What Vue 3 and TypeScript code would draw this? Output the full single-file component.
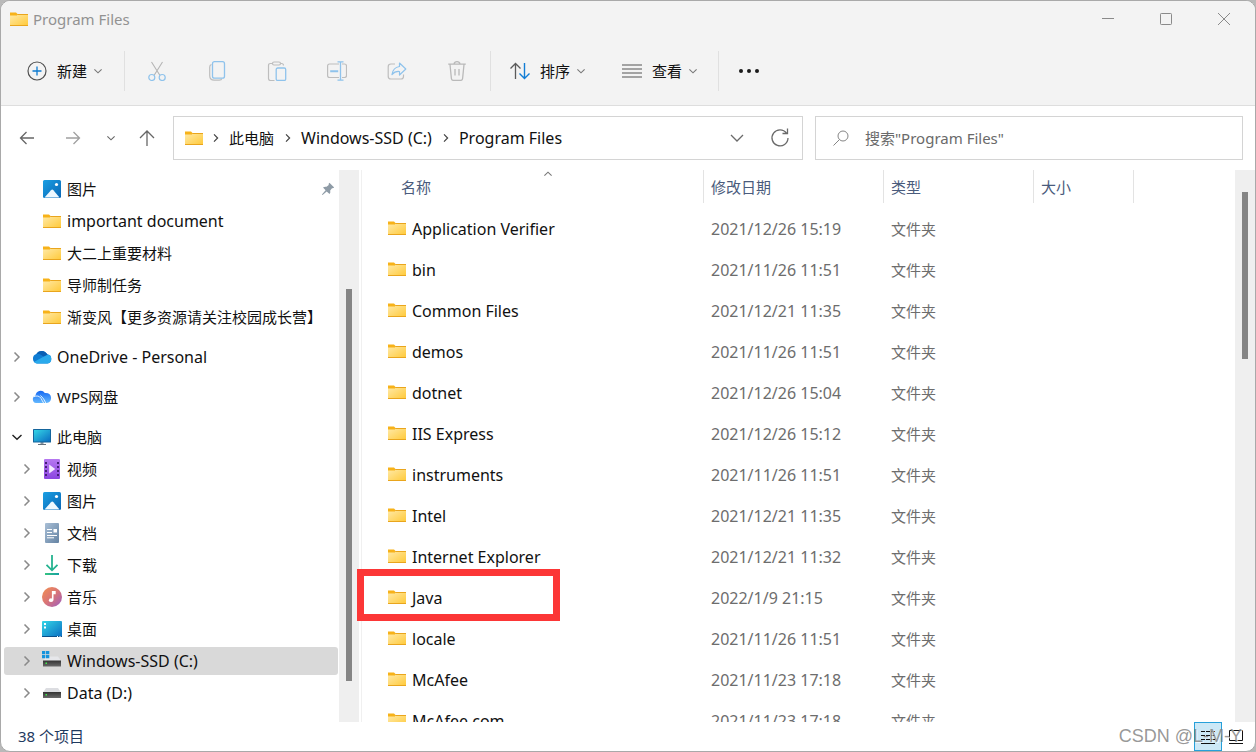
<script setup lang="ts">
import { ref } from 'vue'

interface TreeItem {
  label: string
  icon: string
  level: number
  chevron?: 'right' | 'down'
  pinned?: boolean
  selected?: boolean
  spaced?: boolean
}

interface FileRow {
  name: string
  date: string
}

const tree: TreeItem[] = [
  { label: '图片', icon: 'pictures', level: 1, pinned: true },
  { label: 'important document', icon: 'folder', level: 1 },
  { label: '大二上重要材料', icon: 'folder', level: 1 },
  { label: '导师制任务', icon: 'folder', level: 1 },
  { label: '渐变风【更多资源请关注校园成长营】', icon: 'folder', level: 1 },
  { label: 'OneDrive - Personal', icon: 'onedrive', level: 0, chevron: 'right', spaced: true },
  { label: 'WPS网盘', icon: 'wps', level: 0, chevron: 'right', spaced: true },
  { label: '此电脑', icon: 'pc', level: 0, chevron: 'down', spaced: true },
  { label: '视频', icon: 'video', level: 1, chevron: 'right' },
  { label: '图片', icon: 'pictures', level: 1, chevron: 'right' },
  { label: '文档', icon: 'document', level: 1, chevron: 'right' },
  { label: '下载', icon: 'download', level: 1, chevron: 'right' },
  { label: '音乐', icon: 'music', level: 1, chevron: 'right' },
  { label: '桌面', icon: 'desktop', level: 1, chevron: 'right' },
  { label: 'Windows-SSD (C:)', icon: 'drive-c', level: 1, chevron: 'right', selected: true },
  { label: 'Data (D:)', icon: 'drive', level: 1, chevron: 'right' },
]

const files: FileRow[] = [
  { name: 'Application Verifier', date: '2021/12/26 15:19' },
  { name: 'bin', date: '2021/11/26 11:51' },
  { name: 'Common Files', date: '2021/12/21 11:35' },
  { name: 'demos', date: '2021/11/26 11:51' },
  { name: 'dotnet', date: '2021/12/26 15:04' },
  { name: 'IIS Express', date: '2021/12/26 15:12' },
  { name: 'instruments', date: '2021/11/26 11:51' },
  { name: 'Intel', date: '2021/12/21 11:35' },
  { name: 'Internet Explorer', date: '2021/12/21 11:32' },
  { name: 'Java', date: '2022/1/9 21:15' },
  { name: 'locale', date: '2021/11/26 11:51' },
  { name: 'McAfee', date: '2021/11/23 17:18' },
  { name: 'McAfee.com', date: '2021/11/23 17:18' },
]

const crumbs: string[] = ['此电脑', 'Windows-SSD (C:)', 'Program Files']
const editTools = [
  { icon: 'cut', label: '剪切' },
  { icon: 'copy', label: '复制' },
  { icon: 'paste', label: '粘贴' },
  { icon: 'rename', label: '重命名' },
  { icon: 'share', label: '共享' },
  { icon: 'trash', label: '删除' },
]
const query = ref('')

const isLatin = (s: string): boolean => /^[\x20-\x7e]+$/.test(s)
</script>

<template>
  <svg class="sprite" width="0" height="0" aria-hidden="true">
    <defs>
      <linearGradient id="g-folder" x1="0" y1="0" x2="1" y2="1">
        <stop offset="0" stop-color="#ffe9a6" /><stop offset="1" stop-color="#ffc938" />
      </linearGradient>
      <linearGradient id="g-pic" x1="0" y1="0" x2="1" y2="1">
        <stop offset="0" stop-color="#1a9fe3" /><stop offset="1" stop-color="#0a66b5" />
      </linearGradient>
      <linearGradient id="g-pc" x1="0" y1="0" x2="1" y2="1">
        <stop offset="0" stop-color="#35d6e6" /><stop offset="1" stop-color="#0a6dc2" />
      </linearGradient>
      <linearGradient id="g-video" x1="0" y1="0" x2="0" y2="1">
        <stop offset="0" stop-color="#b678f0" /><stop offset="1" stop-color="#8b45e0" />
      </linearGradient>
      <linearGradient id="g-doc" x1="0" y1="0" x2="1" y2="1">
        <stop offset="0" stop-color="#a9bfd6" /><stop offset="1" stop-color="#6483a3" />
      </linearGradient>
      <linearGradient id="g-music" x1="0" y1="0" x2="1" y2="1">
        <stop offset="0" stop-color="#f3914f" /><stop offset="0.5" stop-color="#d97477" /><stop offset="1" stop-color="#9a5ec4" />
      </linearGradient>
      <linearGradient id="g-down" x1="0" y1="0" x2="1" y2="0">
        <stop offset="0" stop-color="#36c481" /><stop offset="1" stop-color="#149fa3" />
      </linearGradient>
      <linearGradient id="g-wps" x1="0" y1="0" x2="0" y2="1">
        <stop offset="0" stop-color="#1467f2" /><stop offset="1" stop-color="#63b8ff" />
      </linearGradient>
      <linearGradient id="g-drive" x1="0" y1="0" x2="0" y2="1">
        <stop offset="0" stop-color="#333" /><stop offset="1" stop-color="#6a6a6a" />
      </linearGradient>
      <clipPath id="cloud">
        <path d="M5 16.400A4.900 4.900 0 0 1 4.400 6.900 6.200 6.200 0 0 1 15.200 7.300 4.600 4.600 0 0 1 15.500 16.400z" />
      </clipPath>
    </defs>

    <symbol id="folder" viewBox="0 0 20 20">
      <path d="M1 3.500h6l1.500 1.500v3H1z" fill="#f7b219" />
      <path d="M1 6.500h7L9 5.500h10V17H1z" fill="url(#g-folder)" />
      <path d="M8.200 5.500H19M1 16.500h18" stroke="#e9a51d" />
    </symbol>
    <symbol id="pictures" viewBox="0 0 20 20">
      <rect x="1" y="1" width="18" height="18" rx="1.500" fill="url(#g-pic)" />
      <path d="M2.500 18.500 9 11.200q1.200-1.300 2.400 0l6.100 7.300z" fill="#eef8ff" />
      <circle cx="14.500" cy="5.500" r="1.600" fill="#fff" />
    </symbol>
    <symbol id="onedrive" viewBox="0 0 20 20">
      <g clip-path="url(#cloud)">
        <path d="M0 2h20v15H0z" fill="#0f7cd3" />
        <path d="M4 6.900q3-.4 5.200 1.200l3 1.900 4-3V2H4z" fill="#0a5fb4" />
        <path d="M1 15.500 11.500 9.700Q20 5 20 12v5H1z" fill="#2aaaec" />
      </g>
    </symbol>
    <symbol id="wps" viewBox="0 0 20 20">
      <path d="M4 16a3.800 3.800 0 0 1-.4-7.400A5 5 0 0 1 12.800 6q6-.4 6.300 5-.2 4.700-4.500 5z" fill="url(#g-wps)" />
      <path d="M1.500 9.800q5-2.200 7.500 1.500 1.300 2.600 2.600 4.700M8.500 8.500q3.500 3 5.300 7.500" stroke="#e4f3ff" fill="none" />
    </symbol>
    <symbol id="pc" viewBox="0 0 20 20">
      <path d="M8.500 15h3v2.500h-3z" fill="#8b98a4" />
      <path d="M6 17.500h8" stroke="#65717c" />
      <rect x="1" y="2" width="18" height="13.500" rx=".5" fill="#15659c" />
      <rect x="2" y="3" width="16" height="11.500" fill="url(#g-pc)" />
    </symbol>
    <symbol id="video" viewBox="0 0 20 20">
      <rect x="2" y="0" width="16" height="20" rx="1" fill="url(#g-video)" />
      <path d="M4 3v15M16 3v15" stroke="#452078" stroke-width="2" stroke-dasharray="2 2" />
      <path d="M7.200 5.500v9l6-4.500z" fill="#f4eaff" />
    </symbol>
    <symbol id="document" viewBox="0 0 20 20">
      <rect x="3" y="0" width="14" height="20" rx="1" fill="url(#g-doc)" />
      <path d="M5 6.500h5M5 9.500h5M5 12.500h10M5 14.800h7" stroke="#fff" />
      <path d="M11.500 6h3.500v3.500h-3.500z" fill="#fff" />
    </symbol>
    <symbol id="download" viewBox="0 0 20 20">
      <path d="M10 0v15M4.500 9.800l5.500 5.500 5.500-5.500" fill="none" stroke="#25b390" stroke-width="1.800" />
      <rect x="3" y="18" width="14" height="2" fill="url(#g-down)" />
    </symbol>
    <symbol id="music" viewBox="0 0 20 20">
      <circle cx="10" cy="10" r="10" fill="url(#g-music)" />
      <ellipse cx="9" cy="13.200" rx="2.100" ry="1.900" fill="#fff" />
      <path d="M9.900 13.300V4h3.800v3.200h-2.200v6.100z" fill="#fff" />
    </symbol>
    <symbol id="desktop" viewBox="0 0 20 20">
      <rect x="0" y="2" width="20" height="16" rx="1" fill="url(#g-pc)" />
      <path d="M0 17h20v.5q0 .5-1 .5H1q-1 0-1-.500z" fill="#0a4f8a" />
      <path d="M2 4h2v2H2zM2 7.500h2v2H2z" fill="#fff" />
      <path d="M15 17.500h1M17.500 17.500h1" stroke="#fff" />
    </symbol>
    <symbol id="drive" viewBox="0 0 20 20">
      <path d="M1 9.500 4 5h12l3 4.500z" fill="#dcdde1" />
      <rect x="1" y="9" width="18" height="6" fill="url(#g-drive)" />
      <path d="M3.500 11.800h1.500" stroke="#3df04a" stroke-width="1.500" />
    </symbol>
    <symbol id="drive-c" viewBox="0 0 20 20">
      <path d="M1 10 4 5.500h12l3 4.500z" fill="#e6e7ea" />
      <rect x="1" y="9.500" width="18" height="6" fill="url(#g-drive)" />
      <path d="M3.500 12.300h1.500" stroke="#3df04a" stroke-width="1.500" />
      <path d="M0 0h3.300v3.300H0zM4 0h3.300v3.300H4zM0 4h3.300v3.300H0zM4 4h3.300v3.300H4z" fill="#1593dd" />
    </symbol>
    <symbol id="pin" viewBox="0 0 14 14">
      <path d="m8.400.8 4.800 4.800q-1.200 1-2.200.7L9.200 8.500q.6 2-.7 3.500L5.700 9.400 1.600 13l-.7-.6 3.700-4.100L2 5.600q1.500-1.200 3.500-.8l2.200-1.800Q7.300 1.800 8.400.8z" fill="#8e9ba6" />
    </symbol>
    <symbol id="chev-right" viewBox="0 0 10 10"><path d="M2.500.5 7 5 2.500 9.500" fill="none" stroke="currentColor" stroke-width="1.500" /></symbol>
    <symbol id="chev-down" viewBox="0 0 10 10"><path d="M.5 3 5 7.300 9.500 3" fill="none" stroke="currentColor" stroke-width="1.400" /></symbol>

    <symbol id="cut" viewBox="0 0 20 20">
      <path d="M4.500 1 13 14.500M15.500 1 7 14.500" stroke="#b5b5b5" stroke-width="1.100" fill="none" />
      <circle cx="4.800" cy="16.500" r="3" stroke="#8fc3ec" stroke-width="1.200" fill="none" />
      <circle cx="15.200" cy="16.500" r="3" stroke="#8fc3ec" stroke-width="1.200" fill="none" />
    </symbol>
    <symbol id="copy" viewBox="0 0 20 20">
      <path d="M4.500 3.500Q2.700 4 2.700 6v8.500q0 4.700 4.500 4.700h5q2.300 0 2.700-1.700" stroke="#bdbdbd" stroke-width="1.200" fill="none" />
      <rect x="5.500" y=".7" width="12" height="16.500" rx="2" fill="#f3f3f3" stroke="#8fc3ec" stroke-width="1.300" />
    </symbol>
    <symbol id="paste" viewBox="0 0 20 20">
      <path d="M6 2.500H3.500Q1.500 2.500 1.500 4.500v13q0 2 2 2h4M13 2.500h1.500q2 0 2 2" stroke="#bdbdbd" stroke-width="1.200" fill="none" />
      <rect x="5.500" y="1" width="8" height="3" rx="1.500" stroke="#bdbdbd" stroke-width="1.200" fill="none" />
      <rect x="9.200" y="7" width="9.500" height="12.500" rx="1.500" stroke="#8fc3ec" stroke-width="1.300" fill="none" />
    </symbol>
    <symbol id="rename" viewBox="0 0 20 20">
      <path d="M12 3H2.500Q.6 3 .6 5v9.500q0 2 1.900 2H12M15 3h2.500q2 0 2 2v9.500q0 2-2 2H15" stroke="#bdbdbd" stroke-width="1.200" fill="none" />
      <path d="M3.200 10.300h8" stroke="#8fc3ec" stroke-width="2" />
      <path d="M10.500.8h6M13.500.8v18.400M10.500 19.200h6" stroke="#8fc3ec" stroke-width="1.300" />
    </symbol>
    <symbol id="share" viewBox="0 0 20 20">
      <path d="M8 3H4Q1.200 3 1.200 5.800v9.400Q1.200 18 4 18h10q2.500 0 2.500-2.800v-1.700" stroke="#bdbdbd" stroke-width="1.200" fill="none" />
      <path d="M12.500 2 18.800 8l-6.300 6v-3.500Q8 10 5 13.500 6 6.500 12.500 5.500z" stroke="#8fc3ec" stroke-width="1.200" stroke-linejoin="round" fill="none" />
    </symbol>
    <symbol id="trash" viewBox="0 0 20 20">
      <path d="M1.200 3.200h17.600M7 3q.5-2.300 3-2.300T13 3M3 3.500l1.400 14q.2 1.900 2 1.900h7.200q1.800 0 2-1.900l1.400-14M8 8v6.500M12 8v6.500" stroke="#b9b9b9" stroke-width="1.300" fill="none" />
    </symbol>
  </svg>

  <div class="window">
    <header class="chrome">
      <div class="titlebar">
        <svg class="ico"><use href="#folder" /></svg>
        <h1>Program Files</h1>
        <div class="caption">
          <button type="button" aria-label="最小化"><svg viewBox="0 0 14 14"><path d="M1 6.500h12" /></svg></button>
          <button type="button" aria-label="最大化"><svg viewBox="0 0 14 14"><rect x="1.500" y="1.500" width="11" height="11" rx=".8" /></svg></button>
          <button type="button" aria-label="关闭"><svg viewBox="0 0 14 14"><path d="m1 1 12 12M13 1 1 13" /></svg></button>
        </div>
      </div>

      <div class="commands">
        <button type="button" class="cmd new">
          <svg class="ico" viewBox="0 0 20 20" fill="none">
            <circle cx="10" cy="10" r="9" stroke="#505050" stroke-width="1.200" />
            <path d="M10 5.500v9M5.500 10h9" stroke="#0f7bd0" stroke-width="1.300" />
          </svg>
          <span>新建</span>
          <svg class="tiny"><use href="#chev-down" /></svg>
        </button>
        <div class="tools">
          <button v-for="t in editTools" :key="t.icon" type="button" :aria-label="t.label">
            <svg class="ico"><use :href="'#' + t.icon" /></svg>
          </button>
        </div>
        <div class="arrange">
          <button type="button" class="cmd">
            <svg class="ico" viewBox="0 0 20 20" fill="none">
              <path d="M5.500 18V2.500M.5 7.500l5-5 5 5" stroke="#5a5a5a" stroke-width="1.300" />
              <path d="M14.500 2v15.500M9.500 12.500l5 5 5-5" stroke="#117dd5" stroke-width="1.400" />
            </svg>
            <span>排序</span>
            <svg class="tiny"><use href="#chev-down" /></svg>
          </button>
          <button type="button" class="cmd">
            <svg class="ico" viewBox="0 0 20 20"><path d="M0 4h20M0 8h20M0 12h20M0 16h20" stroke="#555" stroke-width="1.200" /></svg>
            <span>查看</span>
            <svg class="tiny"><use href="#chev-down" /></svg>
          </button>
        </div>
        <button type="button" class="more" aria-label="更多">
          <svg class="ico" viewBox="0 0 20 20" fill="#1b1b1b"><circle cx="2" cy="10" r="2" /><circle cx="10" cy="10" r="2" /><circle cx="18" cy="10" r="2" /></svg>
        </button>
      </div>
    </header>

    <nav class="navbar">
      <div class="history">
        <button type="button" aria-label="后退"><svg viewBox="0 0 16 16"><path d="M15 8H1.500M7.500 2l-6 6 6 6" /></svg></button>
        <button type="button" class="dim" aria-label="前进"><svg viewBox="0 0 16 16"><path d="M1 8h13.500M8.500 2l6 6-6 6" /></svg></button>
        <button type="button" class="recent" aria-label="最近位置"><svg><use href="#chev-down" /></svg></button>
        <button type="button" class="up" aria-label="上移"><svg viewBox="0 0 16 16"><path d="M8 16V1M1 8l7-7 7 7" /></svg></button>
      </div>
      <div class="address">
        <svg class="ico"><use href="#folder" /></svg>
        <template v-for="c in crumbs" :key="c">
          <svg class="sep"><use href="#chev-right" /></svg>
          <a href="#" :class="{ latin: isLatin(c) }">{{ c }}</a>
        </template>
        <button type="button" class="expand" aria-label="展开"><svg viewBox="0 0 14 14"><path d="m1 4 6 6 6-6" /></svg></button>
        <button type="button" class="refresh" aria-label="刷新"><svg viewBox="0 0 20 20"><path d="M16.500 5.200a8 8 0 1 0 1.500 4.800M12.500 5.500h5v-5" /></svg></button>
      </div>
      <label class="search">
        <svg viewBox="0 0 16 16"><circle cx="10" cy="6" r="5" /><path d="M6.500 9.500.5 15.500" /></svg>
        <input v-model="query" type="text" aria-label="搜索" placeholder="搜索&quot;Program Files&quot;" />
      </label>
    </nav>

    <main class="workspace">
      <aside class="sidebar">
        <ul>
          <li v-for="(n, i) in tree" :key="i" :class="{ spaced: n.spaced }">
            <a href="#" class="node" :class="{ selected: n.selected, nested: n.level === 1 }">
              <span class="toggle" :class="n.chevron">
                <svg v-if="n.chevron"><use :href="'#chev-' + n.chevron" /></svg>
              </span>
              <svg class="ico"><use :href="'#' + n.icon" /></svg>
              <span class="label" :class="{ latin: isLatin(n.label) }">{{ n.label }}</span>
              <svg v-if="n.pinned" class="pin"><use href="#pin" /></svg>
            </a>
          </li>
        </ul>
      </aside>
      <div class="scroll side"><div class="thumb"></div></div>

      <section class="listing">
        <table>
          <colgroup><col class="c-name" /><col class="c-date" /><col class="c-type" /><col class="c-size" /><col /></colgroup>
          <thead>
            <tr>
              <th><button type="button" class="first">名称<svg class="sort"><use href="#chev-down" /></svg></button></th>
              <th><button type="button">修改日期</button></th>
              <th><button type="button">类型</button></th>
              <th><button type="button">大小</button></th>
              <td></td>
            </tr>
          </thead>
          <tbody>
            <tr v-for="f in files" :key="f.name">
              <td><div class="name latin"><svg class="ico"><use href="#folder" /></svg><span>{{ f.name }}</span></div></td>
              <td class="latin">{{ f.date }}</td>
              <td>文件夹</td>
              <td></td>
              <td></td>
            </tr>
          </tbody>
        </table>
      </section>
      <div class="scroll list"><div class="thumb"></div></div>
      <div class="marker"></div>
    </main>

    <footer class="status">
      <span class="count">38 个项目</span>
      <div class="views">
        <button type="button" class="on" aria-label="详细信息"><svg viewBox="0 0 16 16"><path d="M1 2.500h4M6 2.500h4M11 2.500h4M1 6.500h4M6 6.500h4M11 6.500h4M1 10.500h4M6 10.500h4M11 10.500h4M1 14.500h14" /></svg></button>
        <button type="button" aria-label="大图标"><svg viewBox="0 0 16 16"><path d="M1.500 1.500h13v10h-13zM1 14.500h14" /></svg></button>
      </div>
      <span class="watermark">CSDN @L-M-Y</span>
    </footer>
  </div>
</template>

<style>
html,
body,
#app {
  height: 100%;
}
body {
  background: #b9b9b9;
  overflow: hidden;
}
</style>

<style scoped>
.sprite {
  position: absolute;
}
.window {
  box-sizing: border-box;
  height: 100vh;
  display: flex;
  flex-direction: column;
  border: 1px solid #a9a9a9;
  border-radius: 10px;
  overflow: hidden;
  background: #fff;
  color: #111;
  font: 15px/20px 'Noto Sans', 'Noto Sans CJK SC', sans-serif;
}
.latin {
  font-size: 16px;
}
button {
  border: 0;
  padding: 0;
  background: none;
  font: inherit;
  color: inherit;
  display: flex;
  align-items: center;
  justify-content: center;
}
a {
  color: inherit;
  text-decoration: none;
}
svg {
  flex: none;
}
.ico {
  width: 20px;
  height: 20px;
}
.chrome {
  background: #f3f3f3;
  border-bottom: 1px solid #dedede;
}
.titlebar {
  display: flex;
  align-items: center;
  height: 36px;
  padding-left: 8px;
}
h1 {
  margin: 0 0 0 4px;
  font-size: 15px;
  font-weight: 400;
  color: #929292;
}
.caption {
  display: flex;
  margin: 0 2px 0 auto;
}
.caption button {
  width: 58px;
  height: 36px;
}
.caption svg {
  width: 14px;
  height: 14px;
  fill: none;
  stroke: #8a8a8a;
}
.commands {
  display: flex;
  align-items: center;
  height: 68px;
  padding-left: 26px;
}
.cmd span {
  margin: 0 7px 0 10px;
}
.tiny {
  width: 8px;
  height: 8px;
  color: #777;
}
.new {
  width: 97px;
  justify-content: flex-start;
}
.tools {
  display: flex;
  height: 40px;
  padding: 0 3px 0 2px;
  border: solid #e0e0e0;
  border-width: 0 1px;
}
.tools button {
  width: 60px;
}
.arrange {
  display: flex;
  gap: 37px;
  height: 40px;
  padding: 0 21px 0 19px;
  border-right: 1px solid #e0e0e0;
}
.more {
  margin-left: 20px;
}
.navbar {
  display: flex;
  padding: 10px 12px 10px 3px;
}
.history {
  display: flex;
  width: 169px;
}
.history button {
  width: 46px;
}
.history svg {
  width: 16px;
  height: 16px;
  fill: none;
  stroke: #666;
  stroke-width: 1.3;
}
.history .dim svg {
  stroke: #a0a0a0;
}
.history .recent {
  width: 30px;
  color: #666;
}
.history .recent svg {
  width: 8px;
  height: 8px;
  stroke: none;
}
.history .up {
  width: 42px;
}
.address,
.search {
  box-sizing: border-box;
  display: flex;
  align-items: center;
  height: 44px;
  border: 1px solid #d4d4d4;
}
.address {
  flex: 1;
  padding-left: 10px;
  white-space: nowrap;
}
.address .sep {
  width: 8px;
  height: 8px;
  margin: 0 9px 0 8px;
  color: #444;
}
.address a + .sep {
  margin-left: 10px;
}
.expand {
  margin-left: auto;
}
.expand svg {
  width: 14px;
  height: 14px;
}
.refresh {
  margin: 0 12px 0 26px;
}
.refresh svg {
  width: 20px;
  height: 20px;
}
.expand svg,
.refresh svg {
  fill: none;
  stroke: #6a6a6a;
  stroke-width: 1.3;
}
.search {
  flex: 0 1 428px;
  margin-left: 12px;
  padding-left: 17px;
}
.search svg {
  width: 16px;
  height: 16px;
  fill: none;
  stroke: #858585;
}
.search input {
  flex: 1;
  min-width: 0;
  margin-left: 16px;
  padding: 0;
  border: 0;
  outline: 0;
  font: inherit;
}
.search input::placeholder {
  color: #6a6a6a;
  opacity: 1;
}
.workspace {
  position: relative;
  flex: 1;
  min-height: 0;
  display: flex;
}
.sidebar {
  width: 338px;
  overflow: hidden;
}
ul {
  list-style: none;
  margin: 0;
  padding: 5px 1px 0 3px;
  display: flex;
  flex-direction: column;
  gap: 4px;
}
.spaced {
  margin-top: 8px;
}
.node {
  display: flex;
  align-items: center;
  height: 28px;
  border-radius: 3px;
  white-space: nowrap;
}
.selected {
  background: #d9d9d9;
}
.toggle {
  display: flex;
  width: 20px;
  height: 10px;
  padding-left: 8px;
  color: #8a8a8a;
}
.nested .toggle {
  padding-left: 18px;
}
.toggle.down {
  color: #222;
}
.toggle svg {
  width: 10px;
  height: 10px;
}
.label {
  margin-left: 5px;
}
.pin {
  width: 14px;
  height: 14px;
  margin: 0 3px 0 auto;
}
.scroll {
  width: 20px;
  background: #efefef;
}
.thumb {
  width: 6px;
  margin-left: 7px;
  background: #858585;
}
.side .thumb {
  height: 392px;
  margin-top: 119px;
}
.list .thumb {
  height: 167px;
  margin-top: 22px;
}
.listing {
  flex: 1;
  min-width: 0;
  margin-left: 2px;
  border-left: 1px solid #f0f0f0;
  overflow: hidden;
}
table {
  width: 100%;
  table-layout: fixed;
  border-collapse: collapse;
}
.c-name {
  width: 342px;
}
.c-date {
  width: 180px;
}
.c-type {
  width: 150px;
}
.c-size {
  width: 100px;
}
th {
  height: 38px;
  padding: 0;
  vertical-align: top;
  font-weight: 400;
  color: #4a5b7c;
}
th button {
  position: relative;
  box-sizing: border-box;
  width: 100%;
  height: 33px;
  padding-left: 7px;
  border-right: 1px solid #e3e3e3;
  justify-content: flex-start;
}
th .first {
  padding-left: 39px;
}
.sort {
  position: absolute;
  left: 181px;
  top: 0;
  width: 10px;
  height: 8px;
  transform: rotate(180deg);
  color: #777;
}
tbody td {
  height: 41px;
  padding: 0 0 0 7px;
  color: #6d6d6d;
  white-space: nowrap;
}
tbody td:first-child {
  padding-left: 25px;
  color: #111;
}
.name {
  display: flex;
  align-items: center;
  gap: 5px;
}
.name .ico {
  margin-bottom: 2px;
}
.marker {
  position: absolute;
  left: 356px;
  top: 399px;
  box-sizing: border-box;
  width: 203px;
  height: 52px;
  border: 7px solid #fc3636;
}
.status {
  position: relative;
  display: flex;
  align-items: center;
  justify-content: space-between;
  height: 29px;
  padding: 0 5px 0 17px;
  color: #1f3a5f;
}
.count {
  padding-bottom: 2px;
}
.views {
  display: flex;
}
.views button {
  box-sizing: border-box;
  width: 28px;
  height: 29px;
}
.views .on {
  background: #cce8f6;
  border: 1px solid #26a0da;
}
.views svg {
  width: 16px;
  height: 16px;
  fill: none;
  stroke: #111;
}
.watermark {
  position: absolute;
  right: 13px;
  top: 2px;
  font: 18px/24px 'Liberation Sans', sans-serif;
  color: rgba(125, 125, 125, 0.8);
  text-shadow: 1px 1px 0 rgba(255, 255, 255, 0.7);
  pointer-events: none;
}
</style>
